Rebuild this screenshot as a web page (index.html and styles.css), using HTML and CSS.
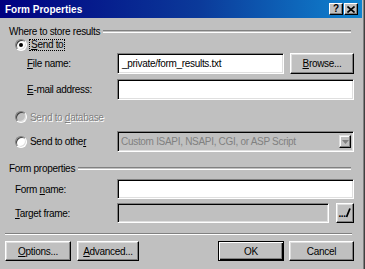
FILE: index.html
```html
<!DOCTYPE html>
<html lang="en">
<head>
    <meta charset="UTF-8">
    <title>Form Properties</title>
    <link rel="stylesheet" href="styles.css">
</head>
<body>
    <div class="window">
        <div class="titlebar">
            <span class="title">Form Properties</span>
            <div class="caption-btns">
                <span class="caption-btn">?</span>
                <span class="caption-btn">
                    <svg width="8" height="7" viewBox="0 0 8 7"><path d="M0.5 0.5 L7.5 6.5 M7.5 0.5 L0.5 6.5" stroke="#000" stroke-width="1.6"/></svg>
                </span>
            </div>
        </div>
        <div class="content">
            <div class="group-head"><span>Where to store results</span></div>

            <div class="radio-row r-send">
                <span class="radio checked"></span>
                <span class="focus"><u>S</u>end to</span>
            </div>

            <div class="field-row sub r-file">
                <label><u>F</u>ile name:</label>
                <div class="input">_private/form_results.txt</div>
                <button class="btn browse"><u>B</u>rowse...</button>
            </div>

            <div class="field-row sub r-email">
                <label><u>E</u>-mail address:</label>
                <div class="input"></div>
            </div>

            <div class="radio-row r-db disabled">
                <span class="radio off"></span>
                <span class="opt">Send to <u>d</u>atabase</span>
            </div>

            <div class="field-row r-other">
                <div class="radio-opt">
                    <span class="radio"></span>
                    <span class="opt">Send to othe<u>r</u></span>
                </div>
                <div class="select">
                    <span class="select-text">Custom ISAPI, NSAPI, CGI, or ASP Script</span>
                    <span class="drop">
                        <svg width="7" height="4" viewBox="0 0 7 4"><path d="M0 0 H7 L3.5 4 Z" fill="#808080"/></svg>
                    </span>
                </div>
            </div>

            <div class="group-head r-props"><span>Form properties</span></div>

            <div class="field-row sub2 r-name">
                <label>Form <u>n</u>ame:</label>
                <div class="input"></div>
            </div>

            <div class="field-row sub2 r-target">
                <label><u>T</u>arget frame:</label>
                <div class="input off"></div>
                <button class="btn pick">
                    <span class="dots">...</span>
                    <svg width="6" height="10" viewBox="0 0 6 10"><path d="M5 0.5 L1.5 9" stroke="#000" stroke-width="1.8"/></svg>
                </button>
            </div>

            <div class="separator"></div>

            <div class="btn-row">
                <button class="btn options"><u>O</u>ptions...</button>
                <button class="btn advanced"><u>A</u>dvanced...</button>
                <div class="spacer"></div>
                <button class="btn ok">OK</button>
                <button class="btn cancel">Cancel</button>
            </div>
        </div>
    </div>
</body>
</html>
```

FILE: styles.css
```css
body {
    margin: 0;
    background: #c0c0c0;
    font-family: 'Liberation Sans', Arial, sans-serif;
    font-size: 10px;
    letter-spacing: -0.3px;
    color: #000;
}
u {
    text-decoration: underline;
    text-underline-offset: 1px;
}
.window {
    width: 362px;
    height: 269px;
    background: #c0c0c0;
    border-right: 1px solid #404040;
    box-shadow: inset -1px 0 #808080;
    padding-right: 2px;
}
.titlebar {
    height: 18px;
    display: flex;
    align-items: center;
    background: linear-gradient(90deg, #000080 0%, #0b3a9a 55%, #1084d0 100%);
    padding-left: 5px;
}
.title {
    color: #fff;
    font-weight: bold;
    letter-spacing: 0;
    flex: 1;
}
.caption-btns {
    display: flex;
    gap: 1px;
    margin-right: 4px;
}
.caption-btn {
    width: 12px;
    height: 10px;
    background: #c0c0c0;
    border: 1px solid;
    border-color: #fff #000 #000 #fff;
    box-shadow: inset -1px -1px #808080;
    display: flex;
    align-items: center;
    justify-content: center;
    font-weight: bold;
    font-size: 10px;
    line-height: 10px;
}
.content {
    padding: 7px 8px 0 5px;
    display: flex;
    flex-direction: column;
}
.group-head {
    height: 12px;
    display: flex;
    align-items: center;
    padding-left: 4px;
    margin-right: 3px;
}
.group-head::after {
    content: "";
    flex: 1;
    height: 1px;
    margin-left: 3px;
    border-top: 1px solid #808080;
    border-bottom: 1px solid #fff;
}
.radio-row {
    height: 12px;
    display: flex;
    align-items: center;
    padding-left: 10px;
}
.r-send { margin-top: 2px; }
.r-file { margin-top: 2px; }
.r-email { margin-top: 5px; }
.r-db { margin-top: 11px; }
.r-other { margin-top: 8px; }
.r-props { margin-top: 10px; }
.r-name { margin-top: 5px; }
.r-target { margin-top: 4px; }
.radio {
    width: 10px;
    height: 10px;
    border-radius: 50%;
    background: #fff;
    border: 1px solid;
    border-color: #808080 #fff #fff #808080;
    box-shadow: inset 1px 1px #404040, inset -1px -1px #dfdfdf;
    position: relative;
    flex: none;
}
.radio.off {
    background: #c0c0c0;
}
.radio.checked::after {
    content: "";
    position: absolute;
    left: 3px;
    top: 3px;
    width: 4px;
    height: 4px;
    border-radius: 50%;
    background: #000;
}
.focus {
    margin-left: 2px;
    padding: 0 1px;
    border: 1px dotted #000;
    line-height: 10px;
}
.opt {
    margin-left: 3px;
}
.disabled .opt {
    color: #808080;
    text-shadow: 1px 1px #fff;
}
.field-row {
    display: flex;
    align-items: center;
    height: 21px;
}
.field-row label {
    width: 112px;
    box-sizing: border-box;
    flex: none;
}
.sub label { padding-left: 22px; }
.sub2 label { padding-left: 10px; }
.r-name, .r-target { height: 20px; }
.input {
    flex: 1;
    align-self: stretch;
    background: #fff;
    border: 1px solid;
    border-color: #808080 #fff #fff #808080;
    box-shadow: inset 1px 1px #000, inset -1px -1px #dfdfdf;
    padding-left: 4px;
    display: flex;
    align-items: center;
}
.input.off {
    background: #c0c0c0;
}
.btn {
    font: inherit;
    letter-spacing: inherit;
    color: #000;
    background: #c0c0c0;
    border: 1px solid;
    border-color: #fff #000 #000 #fff;
    box-shadow: inset -1px -1px #808080, inset 1px 1px #dfdfdf;
    padding: 0;
    height: 20px;
    display: flex;
    align-items: center;
    justify-content: center;
}
.browse {
    width: 64px;
    height: 21px;
    margin-left: 6px;
}
.pick {
    width: 18px;
    margin-left: 7px;
    gap: 0;
    align-items: flex-end;
    padding-bottom: 4px;
}
.pick .dots {
    font-weight: bold;
    line-height: 8px;
    letter-spacing: -0.5px;
}
.radio-opt {
    width: 112px;
    box-sizing: border-box;
    padding-left: 10px;
    display: flex;
    align-items: center;
    flex: none;
}
.select {
    flex: 1;
    align-self: stretch;
    background: #c0c0c0;
    border: 1px solid;
    border-color: #808080 #fff #fff #808080;
    box-shadow: inset 1px 1px #000, inset -1px -1px #dfdfdf;
    display: flex;
    align-items: center;
    padding: 2px 2px 2px 3px;
}
.select-text {
    flex: 1;
    color: #808080;
}
.drop {
    width: 12px;
    height: 13px;
    box-sizing: border-box;
    border: 1px solid;
    border-color: #dfdfdf #000 #000 #dfdfdf;
    box-shadow: inset -1px -1px #808080, inset 1px 1px #fff;
    display: flex;
    align-items: center;
    justify-content: center;
}
.separator {
    margin-top: 10px;
    height: 0;
    border-top: 1px solid #808080;
    border-bottom: 1px solid #fff;
    margin-right: 2px;
}
.btn-row {
    margin-top: 6px;
    display: flex;
}
.options { width: 66px; }
.advanced { width: 62px; margin-left: 6px; }
.spacer { flex: 1; }
.ok {
    width: 66px;
    border: 1px solid #000;
    box-shadow: inset 1px 1px #fff, inset -1px -1px #000, inset -2px -2px #808080;
}
.cancel { width: 65px; margin-left: 5px; }
```
